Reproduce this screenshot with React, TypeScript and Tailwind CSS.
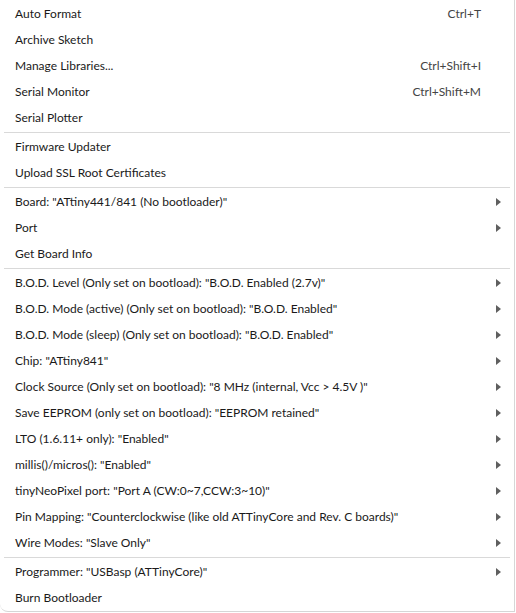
import React from "react";

type Item = { label: string; shortcut?: string; sub?: boolean };

const groups: Item[][] = [
  [
    { label: "Auto Format", shortcut: "Ctrl+T" },
    { label: "Archive Sketch" },
    { label: "Manage Libraries...", shortcut: "Ctrl+Shift+I" },
    { label: "Serial Monitor", shortcut: "Ctrl+Shift+M" },
    { label: "Serial Plotter" },
  ],
  [{ label: "Firmware Updater" }, { label: "Upload SSL Root Certificates" }],
  [
    { label: 'Board: "ATtiny441/841 (No bootloader)"', sub: true },
    { label: "Port", sub: true },
    { label: "Get Board Info" },
  ],
  [
    { label: 'B.O.D. Level (Only set on bootload): "B.O.D. Enabled (2.7v)"', sub: true },
    { label: 'B.O.D. Mode (active) (Only set on bootload): "B.O.D. Enabled"', sub: true },
    { label: 'B.O.D. Mode (sleep) (Only set on bootload): "B.O.D. Enabled"', sub: true },
    { label: 'Chip: "ATtiny841"', sub: true },
    { label: 'Clock Source (Only set on bootload): "8 MHz (internal, Vcc > 4.5V )"', sub: true },
    { label: 'Save EEPROM (only set on bootload): "EEPROM retained"', sub: true },
    { label: 'LTO (1.6.11+ only): "Enabled"', sub: true },
    { label: 'millis()/micros(): "Enabled"', sub: true },
    { label: 'tinyNeoPixel port: "Port A (CW:0~7,CCW:3~10)"', sub: true },
    { label: 'Pin Mapping: "Counterclockwise (like old ATTinyCore and Rev. C boards)"', sub: true },
    { label: 'Wire Modes: "Slave Only"', sub: true },
  ],
  [{ label: 'Programmer: "USBasp (ATTinyCore)"', sub: true }, { label: "Burn Bootloader" }],
];

function Arrow() {
  return (
    <svg width="5" height="8" viewBox="0 0 5 8" className="shrink-0">
      <path d="M0 0 L5 4 L0 8 Z" fill="#5f5f5f" />
    </svg>
  );
}

function Row({ item }: { item: Item }) {
  return (
    <div className="h-[26px] flex items-center pl-[15px] pr-[13px] text-[#1a1a1a]">
      <span className="flex-1 whitespace-nowrap">{item.label}</span>
      {item.shortcut && <span className="text-[#444] mr-[20px]">{item.shortcut}</span>}
      {item.sub && <Arrow />}
    </div>
  );
}

export default function App() {
  return (
    <div className="w-[516px] h-[613px] bg-white overflow-hidden">
      <div
        className="w-[515px] h-[612px] bg-white border-r border-b border-[#d6d6d6] rounded-bl-[8px] pt-px text-[12px]"
        style={{ fontFamily: 'Lato, "Noto Sans", sans-serif' }}
      >
        {groups.map((g, gi) => (
          <div key={gi}>
            {gi > 0 && <div className="h-px bg-[#d9d9d9] my-px mx-[4px]" />}
            {g.map((it) => (
              <Row key={it.label} item={it} />
            ))}
          </div>
        ))}
      </div>
    </div>
  );
}
